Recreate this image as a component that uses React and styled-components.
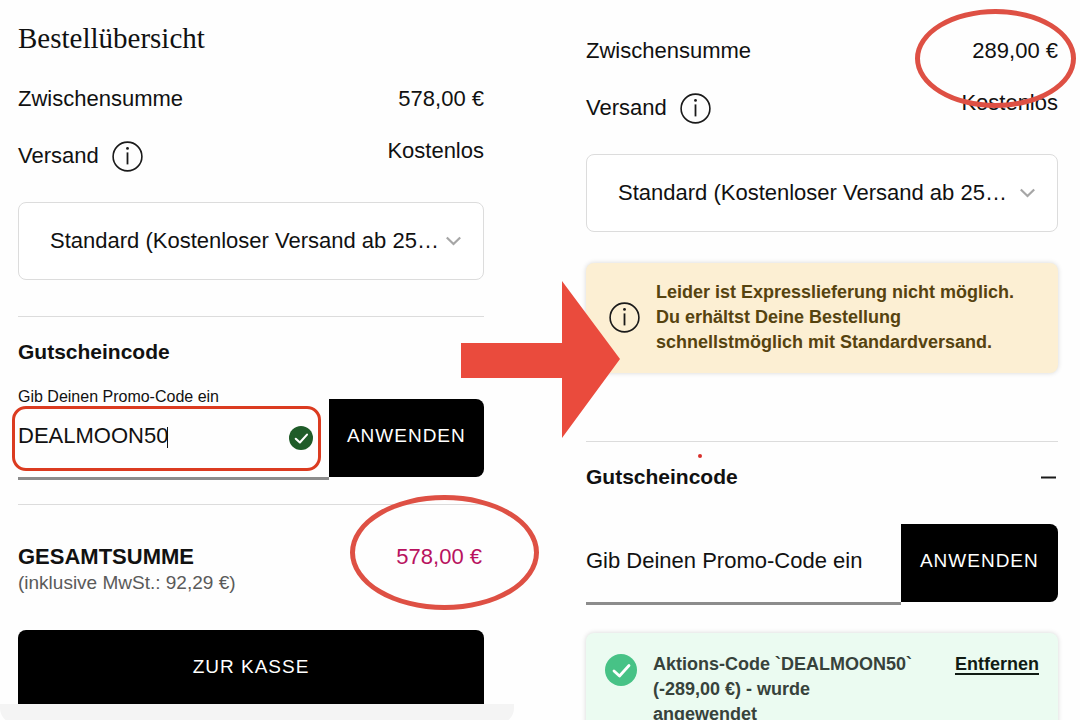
import React from 'react';
import styled, { createGlobalStyle } from 'styled-components';

const GlobalStyle = createGlobalStyle`
  *, *::before, *::after { box-sizing: border-box; }
  body {
    margin: 0;
    background: #fefefe;
    color: #111;
    font-family: "Liberation Sans", Arial, sans-serif;
    font-size: 22px;
    line-height: 26px;
  }
  h1, h2, p { margin: 0; }
  button, input, select { font: inherit; color: inherit; }
`;

const Page = styled.main`
  display: grid;
  grid-template-columns: 466fr 472fr;
  column-gap: 102px;
  height: 100vh;
  padding: 0 22px 0 18px;
  overflow: hidden;
`;

const Column = styled.section`
  display: flex;
  flex-direction: column;
  min-width: 0;
  padding-top: ${(p) => p.$top}px;
`;

const Title = styled.h1`
  margin-bottom: 32px;
  font-family: "Liberation Serif", serif;
  font-size: 29px;
  font-weight: 400;
  line-height: 32px;
`;

const Row = styled.div`
  display: flex;
  justify-content: space-between;
  margin-bottom: 26px;
`;

const ShippingRow = styled(Row)`
  height: 36px;
  margin-bottom: 28px;
`;

const ShippingLabel = styled.div`
  display: flex;
  align-items: center;
  gap: 13px;
`;

const IconButton = styled.button`
  display: flex;
  padding: 0;
  border: 0;
  background: none;
`;

const Value = styled.span`
  position: relative;
  color: ${(p) => (p.$accent ? '#b8125f' : 'inherit')};
`;

const Oval = styled.span`
  position: absolute;
  top: ${(p) => (p.$large ? -49 : -29)}px;
  right: ${(p) => (p.$large ? -57 : -18)}px;
  z-index: 2;
  width: ${(p) => (p.$large ? 189 : 161)}px;
  height: ${(p) => (p.$large ? 115 : 99)}px;
  border: 5px solid #de5044;
  border-radius: 50%;
  pointer-events: none;
`;

const SelectBox = styled.div`
  position: relative;
  svg {
    position: absolute;
    top: 34px;
    right: 22px;
    pointer-events: none;
  }
`;

const Select = styled.select`
  display: block;
  width: 100%;
  height: 78px;
  padding: 0 44px 0 31px;
  border: 1px solid #dcdcdc;
  border-radius: 8px;
  background: #fff;
  appearance: none;
`;

const Divider = styled.hr`
  width: 100%;
  height: 1px;
  margin: ${(p) => p.$top}px 0 0;
  border: 0;
  background: #dcdcdc;
`;

const SectionHead = styled.div`
  position: relative;
  display: flex;
  align-items: center;
  justify-content: space-between;
  margin: 22px 0;
`;

const SectionTitle = styled.h2`
  font-size: 21px;
  font-weight: 700;
  line-height: 26px;
`;

const Dot = styled.span`
  position: absolute;
  top: -10px;
  left: 112px;
  width: 4px;
  height: 4px;
  border-radius: 50%;
  background: #d8302c;
`;

const CodeForm = styled.form`
  display: flex;
`;

const Field = styled.div`
  position: relative;
  display: flex;
  flex: 2 1 0;
  flex-direction: column;
  justify-content: flex-end;
  min-width: 0;
  height: 93px;
`;

const FieldLabel = styled.label`
  font-size: 16px;
  line-height: 20px;
`;

const CodeInput = styled.input`
  width: 100%;
  height: 73px;
  padding: 0 0 12px;
  border: 0;
  border-bottom: 3px solid #8c8c8c;
  background: none;
  outline: 0;
  &::placeholder { color: #111; opacity: 1; }
`;

const Caret = styled.span`
  position: absolute;
  top: 40px;
  left: 149px;
  width: 1px;
  height: 21px;
  background: #111;
`;

const Highlight = styled.span`
  position: absolute;
  top: 19px;
  left: -6px;
  right: 8px;
  height: 65px;
  border: 3px solid #db3b20;
  border-radius: 14px;
  pointer-events: none;
`;

const ValidMark = styled.span`
  position: absolute;
  top: 39px;
  right: 16px;
  display: flex;
`;

const BlackButton = styled.button`
  padding: 0;
  border: 0;
  background: #000;
  color: #fff;
  font-size: 19px;
  letter-spacing: 1px;
`;

const ApplyButton = styled(BlackButton)`
  flex: 1 1 0;
  height: 78px;
  margin-top: 12px;
  padding-bottom: 4px;
  border-radius: 0 8px 8px 0;
`;

const CheckoutButton = styled(BlackButton)`
  height: 74px;
  margin-top: 34px;
  border-radius: 8px 8px 0 0;
`;

const Total = styled.div`
  display: flex;
  justify-content: space-between;
  margin-top: 39px;
  padding-right: 2px;
`;

const TotalLabel = styled.p`
  font-weight: 700;
`;

const TaxNote = styled.p`
  color: #5a5a5a;
  font-size: 19px;
`;

const BottomSheet = styled.div`
  flex: none;
  height: 20px;
  margin: 0 -30px 0 -18px;
  border-radius: 0 0 16px 16px;
  background: #f4f4f4;
`;

const Message = styled.div`
  position: relative;
  display: flex;
  border-radius: 8px;
  box-shadow: 0 0 5px rgba(0, 0, 0, 0.16);
  font-size: 18px;
  font-weight: 700;
  line-height: 25px;
`;

const Warning = styled(Message)`
  align-items: center;
  gap: 16px;
  margin-top: 31px;
  padding: 17px 24px 18px 23px;
  background: #fcefd3;
  color: #56430f;
`;

const Success = styled(Message)`
  align-items: flex-start;
  gap: 16px;
  margin-top: 28px;
  padding: 19px;
  background: #ebfbf1;
  color: #37423b;
  svg { flex: none; margin-top: 2px; }
`;

const SuccessText = styled.p`
  flex: 1;
  margin-right: 20px;
`;

const RemoveLink = styled.a`
  color: #111b14;
  text-decoration: underline;
  text-decoration-thickness: 2px;
  text-underline-offset: 3px;
`;

const Arrow = styled.svg`
  position: absolute;
  top: 18px;
  left: -125px;
  z-index: 1;
  pointer-events: none;
`;

const InfoIcon = () => (
  <svg width="31" height="31" viewBox="0 0 31 31" fill="none" stroke="#1a1a1a" aria-hidden="true">
    <circle cx="15.5" cy="15.5" r="14.4" strokeWidth="1.6" />
    <path d="M15.5 11.4v12" strokeWidth="1.8" />
    <circle cx="15.5" cy="7.4" r="1.4" fill="#1a1a1a" stroke="none" />
  </svg>
);

const CheckIcon = ({ size, color }) => (
  <svg width={size} height={size} viewBox="0 0 32 32" fill="none" aria-hidden="true">
    <circle cx="16" cy="16" r="16" fill={color} />
    <path d="M9 17l5.5 5L24 11.5" stroke="#fff" strokeWidth="2.8" strokeLinecap="round" strokeLinejoin="round" />
  </svg>
);

const Shipping = ({ id }) => (
  <>
    <ShippingRow>
      <ShippingLabel>
        <label htmlFor={id}>Versand</label>
        <IconButton type="button" aria-label="Versandinformationen">
          <InfoIcon />
        </IconButton>
      </ShippingLabel>
      <Value>Kostenlos</Value>
    </ShippingRow>
    <SelectBox>
      <Select id={id}>
        <option>Standard (Kostenloser Versand ab 25…</option>
      </Select>
      <svg width="17" height="11" viewBox="0 0 17 11" fill="none" aria-hidden="true">
        <path d="M1.8 1.5l6.7 6.5 6.7-6.5" stroke="#a6a6a6" strokeWidth="2.2" />
      </svg>
    </SelectBox>
  </>
);

export default function App() {
  const stop = (e) => e.preventDefault();
  return (
    <>
      <GlobalStyle />
      <Page>
        <Column $top={22}>
          <Title>Bestellübersicht</Title>
          <Row>
            <span>Zwischensumme</span>
            <Value>578,00 €</Value>
          </Row>
          <Shipping id="shipping-before" />
          <Divider $top={36} />
          <SectionHead>
            <SectionTitle>Gutscheincode</SectionTitle>
          </SectionHead>
          <CodeForm onSubmit={stop}>
            <Field>
              <FieldLabel htmlFor="code-before">Gib Deinen Promo-Code ein</FieldLabel>
              <CodeInput id="code-before" defaultValue="DEALMOON50" />
              <Caret />
              <ValidMark>
                <CheckIcon size={24} color="#1f5c29" />
              </ValidMark>
              <Highlight />
            </Field>
            <ApplyButton type="submit">ANWENDEN</ApplyButton>
          </CodeForm>
          <Divider $top={24} />
          <Total>
            <div>
              <TotalLabel>GESAMTSUMME</TotalLabel>
              <TaxNote>(inklusive MwSt.: 92,29 €)</TaxNote>
            </div>
            <Value $accent>
              578,00 €
              <Oval $large />
            </Value>
          </Total>
          <CheckoutButton type="button">ZUR KASSE</CheckoutButton>
          <BottomSheet />
        </Column>

        <Column $top={38}>
          <Row>
            <span>Zwischensumme</span>
            <Value>
              289,00 €
              <Oval />
            </Value>
          </Row>
          <Shipping id="shipping-after" />
          <Warning role="status">
            <InfoIcon />
            <p>
              Leider ist Expresslieferung nicht möglich.
              <br />
              Du erhältst Deine Bestellung
              <br />
              schnellstmöglich mit Standardversand.
            </p>
            <Arrow width="159" height="157" viewBox="0 0 159 157" aria-hidden="true">
              <path d="M0 62h101V0l58 78-58 79V97H0z" fill="#ea4b3d" />
            </Arrow>
          </Warning>
          <Divider $top={68} />
          <SectionHead>
            <SectionTitle>Gutscheincode</SectionTitle>
            <Dot />
            <IconButton type="button" aria-label="Gutscheincode einklappen">
              <svg width="18" height="18" viewBox="0 0 18 18" aria-hidden="true">
                <path d="M1 9.5h15" stroke="#1a1a1a" strokeWidth="2" />
              </svg>
            </IconButton>
          </SectionHead>
          <CodeForm onSubmit={stop}>
            <Field>
              <CodeInput aria-label="Gib Deinen Promo-Code ein" placeholder="Gib Deinen Promo-Code ein" />
            </Field>
            <ApplyButton type="submit">ANWENDEN</ApplyButton>
          </CodeForm>
          <Success role="status">
            <CheckIcon size={32} color="#47c286" />
            <SuccessText>Aktions-Code `DEALMOON50` (-289,00 €) - wurde angewendet</SuccessText>
            <RemoveLink href="#entfernen">Entfernen</RemoveLink>
          </Success>
        </Column>
      </Page>
    </>
  );
}
